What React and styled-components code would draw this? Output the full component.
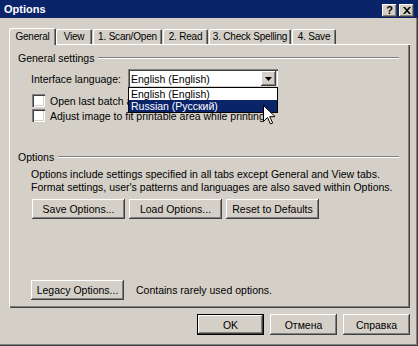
import styled, { createGlobalStyle } from "styled-components";

const GlobalStyle = createGlobalStyle`
    html, body {
        margin: 0;
        padding: 0;
        background: #D4D0C8;
    }
    * {
        box-sizing: border-box;
    }
`;

const tabs = [
    { name: "General", w: 47 },
    { name: "View", w: 36 },
    { name: "1. Scan/Open", w: 69 },
    { name: "2. Read", w: 45 },
    { name: "3. Check Spelling", w: 82 },
    { name: "4. Save", w: 44 },
];

function App() {
    return (
        <>
            <GlobalStyle />
            <Window>
                <TitleBar>
                    <span>Options</span>
                    <TitleButtons>
                        <CaptionButton>?</CaptionButton>
                        <CaptionButton>
                            <svg width="8" height="7" viewBox="0 0 8 7">
                                <path d="M0 0h2l2 2.2L6 0h2L5 3.5 8 7H6L4 4.8 2 7H0l3-3.5z" fill="#000" />
                            </svg>
                        </CaptionButton>
                    </TitleButtons>
                </TitleBar>
                <Body>
                    <TabRow>
                        {tabs.map((t, i) => (
                            <Tab key={t.name} $w={t.w} $active={i === 0}>{t.name}</Tab>
                        ))}
                    </TabRow>
                    <Panel>
                        <GroupHeader>
                            <span>General settings</span>
                            <GroupLine />
                        </GroupHeader>
                        <GroupBody>
                            <LangRow>
                                <Label>Interface language:</Label>
                                <Combo>
                                    <ComboText>English (English)</ComboText>
                                    <ComboArrow>
                                        <svg width="7" height="4" viewBox="0 0 7 4">
                                            <path d="M0 0h7L3.5 4z" fill="#000" />
                                        </svg>
                                    </ComboArrow>
                                    <DropList>
                                        <DropItem>English (English)</DropItem>
                                        <DropItem $selected>Russian (Русский)</DropItem>
                                    </DropList>
                                    <Cursor width="12" height="20" viewBox="0 0 12 20">
                                        <path d="M0.5 0.5v16l4-4 3 6.5 2.2-1-3-6.3h5.5z" fill="#fff" stroke="#000" strokeWidth="1" />
                                    </Cursor>
                                </Combo>
                            </LangRow>
                            <CheckRow $first>
                                <CheckBox />
                                <span>Open last batch at startup</span>
                            </CheckRow>
                            <CheckRow>
                                <CheckBox />
                                <span>Adjust image to fit printable area while printing</span>
                            </CheckRow>
                        </GroupBody>

                        <GroupHeader $top={29}>
                            <span>Options</span>
                            <GroupLine />
                        </GroupHeader>
                        <GroupBody>
                            <Note>
                                Options include settings specified in all tabs except General and View tabs.<br />
                                Format settings, user's patterns and languages are also saved within Options.
                            </Note>
                            <ButtonRow>
                                <Button $w={93}>Save Options...</Button>
                                <Button $w={93}>Load Options...</Button>
                                <Button $w={93}>Reset to Defaults</Button>
                            </ButtonRow>
                        </GroupBody>

                        <LegacyRow>
                            <Button $w={93}>Legacy Options...</Button>
                            <span>Contains rarely used options.</span>
                        </LegacyRow>
                    </Panel>
                    <Footer>
                        <Button $w={67} $h={21} $default>OK</Button>
                        <Button $w={67} $h={21}>Отмена</Button>
                        <Button $w={67} $h={21}>Справка</Button>
                    </Footer>
                </Body>
            </Window>
        </>
    );
}

const Window = styled.div`
    width: 418px;
    height: 346px;
    position: relative;
    background: #D4D0C8;
    font-family: "Liberation Sans", Arial, sans-serif;
    font-size: 10.5px;
    color: #000;
    box-shadow: inset -1px -1px 0 #404040, inset -2px -2px 0 #808080;
    overflow: hidden;
`;

const TitleBar = styled.div`
    height: 18px;
    background: #0A246A;
    color: #fff;
    font-weight: bold;
    font-size: 11px;
    display: flex;
    align-items: center;
    justify-content: space-between;
    padding: 0 4px 0 4px;
`;

const TitleButtons = styled.div`
    display: flex;
    gap: 2px;
    margin-top: 2px;
`;

const CaptionButton = styled.div`
    width: 15px;
    height: 13px;
    background: #D4D0C8;
    color: #000;
    font-size: 11px;
    font-weight: bold;
    display: flex;
    align-items: center;
    justify-content: center;
    box-shadow: inset -1px -1px 0 #404040, inset 1px 1px 0 #fff, inset -2px -2px 0 #808080;
`;

const Body = styled.div`
    padding: 9px 8px 0 9px;
`;

const TabRow = styled.div`
    display: flex;
    align-items: flex-end;
    height: 17px;
    position: relative;
    z-index: 1;
`;

const Tab = styled.div`
    width: ${p => p.$w}px;
    height: ${p => (p.$active ? 17 : 15)}px;
    margin-right: ${p => (p.$active ? 0 : 1)}px;
    margin-bottom: ${p => (p.$active ? -1 : 0)}px;
    font-size: 10px;
    letter-spacing: -0.2px;
    background: #D4D0C8;
    display: flex;
    align-items: center;
    justify-content: center;
    border-radius: 2px 2px 0 0;
    box-shadow: inset 1px 1px 0 #fff, inset -1px 0 0 #404040, inset -2px 0 0 #808080;
    white-space: nowrap;
`;

const Panel = styled.div`
    height: 264px;
    padding: 0 9px 0 9px;
    box-shadow: inset 1px 1px 0 #fff, inset -1px -1px 0 #404040, inset -2px -2px 0 #808080;
    display: flex;
    flex-direction: column;
`;

const GroupHeader = styled.div`
    display: flex;
    align-items: center;
    gap: 4px;
    margin-top: ${p => p.$top ?? 8}px;
    margin-right: 2px;
    height: 12px;
`;

const GroupLine = styled.div`
    flex: 1;
    height: 2px;
    border-top: 1px solid #808080;
    border-bottom: 1px solid #fff;
`;

const GroupBody = styled.div`
    padding-left: 13px;
`;

const LangRow = styled.div`
    display: flex;
    align-items: center;
    margin-top: 5px;
    height: 19px;
`;

const Label = styled.span`
    width: 97px;
`;

const Combo = styled.div`
    position: relative;
    width: 150px;
    height: 19px;
    background: #fff;
    box-shadow: inset 1px 1px 0 #808080, inset 2px 2px 0 #404040, inset -1px -1px 0 #fff, inset -2px -2px 0 #D4D0C8;
    display: flex;
    align-items: center;
    padding: 0 2px 0 3px;
`;

const ComboText = styled.span`
    flex: 1;
`;

const ComboArrow = styled.div`
    width: 15px;
    height: 15px;
    background: #D4D0C8;
    display: flex;
    align-items: center;
    justify-content: center;
    box-shadow: inset -1px -1px 0 #404040, inset 1px 1px 0 #fff, inset -2px -2px 0 #808080;
`;

const DropList = styled.div`
    position: absolute;
    left: 0;
    top: 18px;
    width: 150px;
    background: #fff;
    border: 1px solid #000;
    z-index: 2;
`;

const DropItem = styled.div`
    height: 12px;
    line-height: 12px;
    padding-left: 2px;
    background: ${p => (p.$selected ? "#0A246A" : "#fff")};
    color: ${p => (p.$selected ? "#fff" : "#000")};
`;

const Cursor = styled.svg`
    position: absolute;
    left: 135px;
    top: 36px;
    z-index: 3;
`;

const CheckRow = styled.div`
    display: flex;
    align-items: center;
    gap: 5px;
    height: 13px;
    margin-top: ${p => (p.$first ? 6 : 2)}px;
    margin-left: 1px;
`;

const CheckBox = styled.div`
    width: 13px;
    height: 13px;
    background: #fff;
    box-shadow: inset 1px 1px 0 #808080, inset 2px 2px 0 #404040, inset -1px -1px 0 #fff, inset -2px -2px 0 #D4D0C8;
`;

const Note = styled.div`
    margin-top: 5px;
    line-height: 13px;
`;

const ButtonRow = styled.div`
    display: flex;
    gap: 4px;
    margin-top: 5px;
    margin-left: 1px;
`;

const Button = styled.div`
    width: ${p => p.$w}px;
    height: ${p => p.$h ?? 20}px;
    background: #D4D0C8;
    display: flex;
    align-items: center;
    justify-content: center;
    white-space: nowrap;
    box-shadow: ${p =>
        p.$default
            ? "inset 0 0 0 1px #000, inset -2px -2px 0 #404040, inset 2px 2px 0 #fff, inset -3px -3px 0 #808080"
            : "inset -1px -1px 0 #404040, inset 1px 1px 0 #fff, inset -2px -2px 0 #808080"};
`;

const LegacyRow = styled.div`
    display: flex;
    align-items: center;
    gap: 12px;
    margin-top: auto;
    margin-bottom: 8px;
    padding-left: 13px;
`;

const Footer = styled.div`
    display: flex;
    justify-content: flex-end;
    gap: 6px;
    margin-top: 6px;
`;

export default App;
